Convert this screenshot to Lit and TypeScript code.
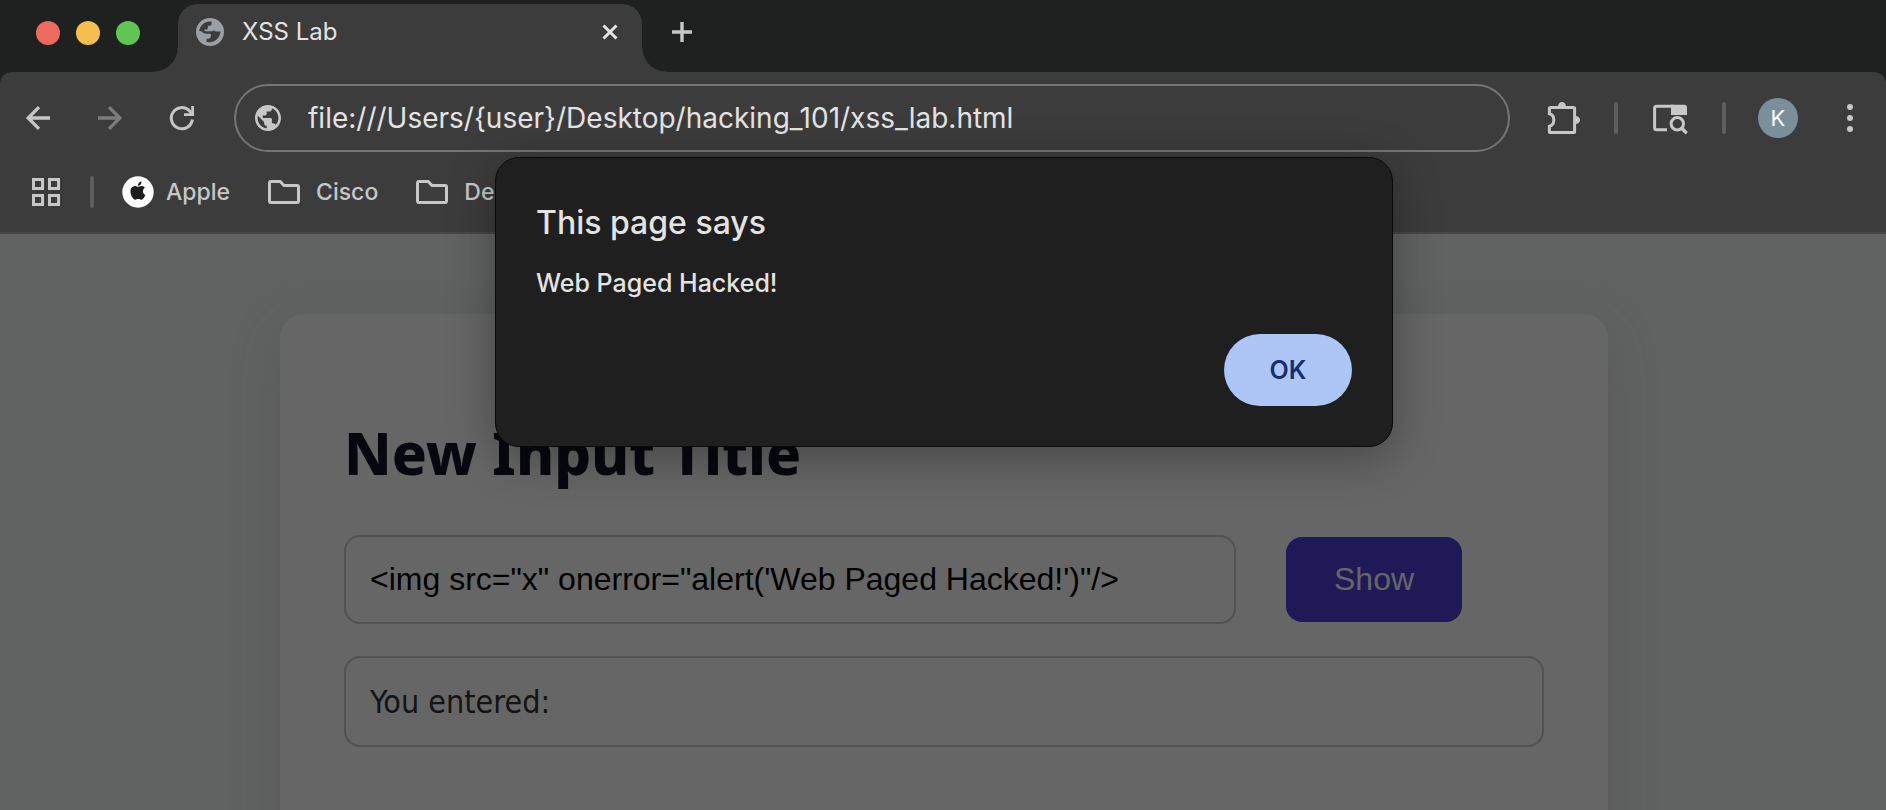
import { LitElement, html, css, svg } from "lit";
import { customElement, state } from "lit/decorators.js";

const icons = {
  favicon: svg`<circle cx="14" cy="14" r="14" fill="#9aa0a6"/>
    <path d="M3.300 13.200C3.600 8 8 3.700 14 3.500h1.600v2.300c0 1.200-.8 1.900-2 1.900h-1.700v2.200c0 .9-.7 1.500-1.600 1.500H8.600c-.3.9.2 1.800 1.300 1.800h5.400c1.400 0 2.200-.6 2.700-1.300.5 1.100 1.500 1.700 2.800 1.700h3.700c-.2 5.700-4.900 10.600-10.600 10.600-1.200 0-2.300-.1-3.400-.5v-3h1.800c1.600 0 2.500-1 2.500-2.400v-2.600H10.500c-2.600 0-3.800-1.300-5-2.500z" fill="#3c3c3c"/>`,
  globe: svg`<path d="M12 2C6.480 2 2 6.480 2 12s4.480 10 10 10 10-4.480 10-10S17.520 2 12 2zm-1 17.930c-3.950-.490-7-3.850-7-7.930 0-.620.080-1.210.210-1.790L9 15v1c0 1.100.900 2 2 2v1.930zm6.900-2.540c-.260-.810-1-1.390-1.900-1.390h-1v-3c0-.550-.450-1-1-1H8v-2h2c.550 0 1-.450 1-1V7h2c1.100 0 2-.900 2-2v-.410c2.930 1.190 5 4.060 5 7.410 0 2.080-.800 3.970-2.100 5.390z" fill="#c7c7c7"/>`,
  close: svg`<path d="M1.500 1.500l13 13M14.500 1.500l-13 13" stroke="#e3e3e3" stroke-width="3"/>`,
  plus: svg`<path d="M10 0v20M0 10h20" stroke="#c7c7c7" stroke-width="3.400"/>`,
  arrow: svg`<path d="M24 12H2.500M13 1.200L2.200 12 13 22.800" fill="none" stroke="currentColor" stroke-width="3.300"/>`,
  reload: svg`<path d="M22.400 13.500A10.600 10.600 0 1 1 19.400 4.700L22 8.300" fill="none" stroke="#c7c7c7" stroke-width="3"/><path d="M24 0v10H14V7.200h7.200V0z" fill="#c7c7c7"/>`,
  apps: svg`<path d="M1.500 1.500h9v9h-9zM17.500 1.500h9v9h-9zM1.500 17.500h9v9h-9zM17.500 17.500h9v9h-9z" fill="none" stroke="#c7c7c7" stroke-width="3"/>`,
  apple: svg`<circle cx="16" cy="16" r="15.700" fill="#fff"/><path transform="translate(6.800 5.500) scale(.76)" d="M12.152 6.896c-.948 0-2.415-1.078-3.960-1.040-2.040.027-3.910 1.183-4.961 3.014-2.117 3.675-.546 9.103 1.519 12.090 1.013 1.454 2.208 3.090 3.792 3.039 1.520-.065 2.090-.987 3.935-.987 1.831 0 2.350.987 3.960.948 1.637-.026 2.676-1.480 3.676-2.948 1.156-1.688 1.636-3.325 1.662-3.415-.039-.013-3.182-1.221-3.220-4.857-.026-3.040 2.480-4.494 2.597-4.559-1.429-2.090-3.623-2.324-4.390-2.376-2-.156-3.675 1.090-4.610 1.090zM15.530 3.830c.843-1.012 1.400-2.427 1.245-3.830-1.207.052-2.662.805-3.532 1.818-.780.896-1.454 2.338-1.273 3.714 1.338.104 2.715-.688 3.559-1.701" fill="#1c1c1e"/>`,
  folder: svg`<path d="M1.500 21V3q0-1.500 1.500-1.500h9.200L16 5.500h13q1.500 0 1.500 1.500v14q0 1.500-1.500 1.500H3Q1.500 22.500 1.500 21z" fill="none" stroke="#c7c7c7" stroke-width="3"/>`,
  puzzle: svg`<path d="M1.400 11.800V6.600q0-1.200 1.200-1.200h22.800q1.200 0 1.200 1.200v22.800q0 1.200-1.200 1.200H2.600q-1.200 0-1.200-1.200v-5.200c3.200-.6 4.400-3.400 4.400-6.200s-1.200-5.600-4.400-6.200z" fill="none" stroke="#c7c7c7" stroke-width="3"/><path d="M10 4.500a4 4.500 0 0 1 8 0zM27.500 14a4.500 4 0 0 1 0 8z" fill="#c7c7c7"/>`,
  tabSearch: svg`<path d="M15 29.800H4.600q-2 0-2-2V8.200q0-2 2-2H22" fill="none" stroke="#c7c7c7" stroke-width="3"/><path d="M19 4.700h13.500q2.500 0 2.500 2.500V15H19z" fill="#c7c7c7"/><circle cx="25.300" cy="23.700" r="6.200" fill="none" stroke="#c7c7c7" stroke-width="3"/><path d="M29.500 28l5.200 5.200" stroke="#c7c7c7" stroke-width="3.400"/>`,
  dots: svg`<circle cx="3" cy="3" r="3"/><circle cx="3" cy="14" r="3"/><circle cx="3" cy="25" r="3"/>`,
};

const icon = (name: keyof typeof icons, w: number, h = w, box = `0 0 ${w} ${h}`) =>
  html`<svg width=${w} height=${h} viewBox=${box} fill="#c7c7c7" aria-hidden="true">${icons[name]}</svg>`;

@customElement("browser-chrome")
class BrowserChrome extends LitElement {
  static styles = css`
    :host { display: block; background: #1f2120; font-family: Inter, "Liberation Sans", sans-serif; color: #e3e3e3; }
    * { box-sizing: border-box; }
    svg { display: block; flex: none; overflow: visible; }
    button { display: flex; align-items: center; justify-content: center; margin: 0; padding: 0; border: 0; background: none; color: #c7c7c7; font: inherit; }
    .strip { display: flex; align-items: flex-start; height: 72px; padding-top: 4px; }
    .lights { display: flex; gap: 16px; padding: 17px 38px 0 36px; }
    .light { width: 24px; height: 24px; border-radius: 50%; }
    .red { background: #ed6a5e; }
    .yellow { background: #f5bf4f; }
    .green { background: #61c554; }
    .tab { position: relative; display: flex; align-items: center; width: 464px; height: 68px; padding: 0 24px 12px 18px; border-radius: 20px 20px 0 0; background: #3c3c3c; font-size: 24px; line-height: 32px; }
    .tab::before, .tab::after { content: ""; position: absolute; bottom: 0; width: 24px; height: 24px; }
    .tab::before { right: 100%; background: radial-gradient(circle at 0 0, transparent 23px, #3c3c3c 24px); }
    .tab::after { left: 100%; background: radial-gradient(circle at 100% 0, transparent 23px, #3c3c3c 24px); }
    .name { flex: 1; padding-left: 18px; }
    .new { width: 56px; height: 56px; margin-left: 12px; }
    .panel { background: #3c3c3c; border-radius: 12px 12px 0 0; border-bottom: 2px solid #474747; }
    .toolbar { display: flex; align-items: center; padding: 12px 33px 0 2px; }
    .nav { width: 72px; height: 68px; }
    .forward { color: #7c7c7c; }
    .forward svg { transform: scaleX(-1); }
    .omnibox { display: flex; align-items: center; flex: 1; height: 68px; margin: 0 38px 0 16px; padding: 0 32px 0 19px; border: 2px solid #757575; border-radius: 34px; }
    .url { flex: 1; min-width: 0; margin-left: 27px; padding: 0; border: 0; outline: 0; background: none; color: #e3e3e3; font: 28px/40px Inter, "Liberation Sans", sans-serif; }
    .rule { flex: none; width: 4px; height: 32px; margin: 0 34px; border-radius: 2px; background: #5e5e5e; }
    .rule.last { margin-right: 32px; }
    .avatar { width: 40px; height: 40px; margin-right: 49px; border-radius: 50%; background: #7b8f9b; color: #fff; font-size: 22px; line-height: 40px; }
    .bookmarks { display: flex; align-items: center; height: 80px; padding: 0 32px; }
    .bookmarks .rule { margin: 0 28px 0 30px; }
    .mark { display: flex; align-items: center; gap: 12px; margin-right: 38px; color: #c7c7c7; font-size: 23px; font-weight: 500; line-height: 32px; text-decoration: none; }
    .folder { gap: 16px; }
  `;
  render() {
    return html`
      <div class="strip">
        <div class="lights"><span class="light red"></span><span class="light yellow"></span><span class="light green"></span></div>
        <div class="tab">
          ${icon("favicon", 28)}<span class="name">XSS Lab</span>
          <button aria-label="Close tab">${icon("close", 16)}</button>
        </div>
        <button class="new" aria-label="New tab">${icon("plus", 20)}</button>
      </div>
      <div class="panel">
        <div class="toolbar">
          <button class="nav" aria-label="Back">${icon("arrow", 24)}</button>
          <button class="nav forward" aria-label="Forward" disabled>${icon("arrow", 24)}</button>
          <button class="nav" aria-label="Reload">${icon("reload", 24)}</button>
          <div class="omnibox">
            ${icon("globe", 26, 26, "2 2 20 20")}
            <input class="url" aria-label="Address" value="file:///Users/{user}/Desktop/hacking_101/xss_lab.html" />
          </div>
          <button aria-label="Extensions">${icon("puzzle", 32)}</button>
          <span class="rule"></span>
          <button aria-label="Search tabs">${icon("tabSearch", 36)}</button>
          <span class="rule last"></span>
          <button class="avatar" aria-label="Profile K">K</button>
          <button aria-label="Menu">${icon("dots", 6, 28)}</button>
        </div>
        <div class="bookmarks">
          <button aria-label="Apps">${icon("apps", 28)}</button>
          <span class="rule"></span>
          <a class="mark" href="#">${icon("apple", 32)}Apple</a>
          <a class="mark folder" href="#">${icon("folder", 32, 24)}Cisco</a>
          <a class="mark folder" href="#">${icon("folder", 32, 24)}De</a>
        </div>
      </div>`;
  }
}

@customElement("lab-page")
class LabPage extends LitElement {
  static styles = css`
    :host { display: block; overflow: hidden; background: #606362; font-family: Tahoma, "DejaVu Sans Condensed", sans-serif; }
    * { box-sizing: border-box; }
    .card { min-height: 100%; margin: 80px 278px 0 280px; padding: 64px; border-radius: 24px; background: #666; box-shadow: 0 16px 48px rgba(76, 64, 72, 0.3); }
    h1 { margin: 36px 0 44px; color: #07080f; font: 800 58px/77px "Noto Sans", sans-serif; }
    .row { display: flex; align-items: center; gap: 50px; margin-bottom: 32px; }
    .entry { width: 892px; height: 89px; padding: 0 24px; border: 2px solid #525252; border-radius: 16px; outline: 0; background: none; color: #000; font: 32px/40px Arial, "Liberation Sans", sans-serif; }
    .show { height: 85px; padding: 0 48px 2px; border: 0; border-radius: 16px; background: #1f1a57; color: #666; font: 32px/40px Arial, "Liberation Sans", sans-serif; }
    .output { display: block; padding: 25px 24px 23px; border: 2px solid #525252; border-radius: 16px; color: #141414; font-size: 32px; line-height: 39px; }
  `;
  render() {
    return html`
      <main class="card">
        <h1>New Input Title</h1>
        <div class="row">
          <input class="entry" id="entry" aria-label="Input" value=${`<img src="x" onerror="alert('Web Paged Hacked!')"/>`} />
          <button class="show">Show</button>
        </div>
        <output class="output" for="entry">You entered:</output>
      </main>`;
  }
}

@customElement("alert-dialog")
class AlertDialog extends LitElement {
  static styles = css`
    :host { position: absolute; top: 157px; left: calc(50% + 1px); width: 898px; max-width: 100%; transform: translateX(-50%); box-sizing: border-box; padding: 43px 40px 40px; border: 1px solid #0a0a0a; border-radius: 24px; background: #1f1f1f; color: #e3e3e3; font-family: Inter, "Liberation Sans", sans-serif; box-shadow: 0 10px 48px rgba(0, 0, 0, 0.32); }
    h2 { margin: 0 0 17px; font-size: 32px; line-height: 44px; font-weight: 500; }
    p { margin: 0 0 30px; font-size: 25px; font-weight: 500; line-height: 42px; }
    .actions { display: flex; justify-content: flex-end; }
    button { width: 128px; height: 72px; border: 0; border-radius: 36px; background: #aec6f6; color: #152e70; font: 600 25px/32px Inter, "Liberation Sans", sans-serif; }
  `;
  private dismiss() {
    this.dispatchEvent(new CustomEvent("dismiss"));
  }
  render() {
    return html`
      <h2>This page says</h2>
      <p>Web Paged Hacked!</p>
      <div class="actions"><button @click=${this.dismiss}>OK</button></div>`;
  }
}

@customElement("app-root")
class AppRoot extends LitElement {
  static styles = css`
    :host { position: relative; display: flex; flex-direction: column; height: 100vh; overflow: hidden; }
    lab-page { flex: 1; }
  `;
  @state() private alerting = true;
  render() {
    return html`
      <browser-chrome></browser-chrome>
      <lab-page></lab-page>
      ${this.alerting ? html`<alert-dialog role="alertdialog" @dismiss=${() => (this.alerting = false)}></alert-dialog>` : null}`;
  }
}
